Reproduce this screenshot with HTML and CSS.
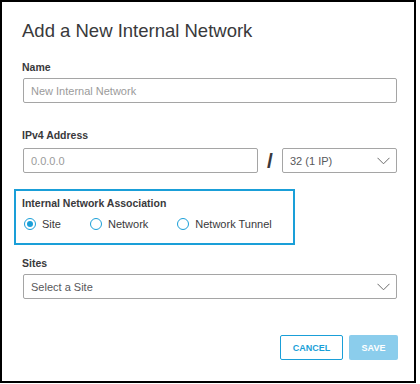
FILE: index.html
```html
<!DOCTYPE html>
<html lang="en">
<head>
    <meta charset="UTF-8">
    <meta name="viewport" content="width=device-width, initial-scale=1.0">
    <title>Add a New Internal Network</title>
    <link rel="stylesheet" href="styles.css">
</head>
<body>
    <!-- 弹窗 -->
    <div class="dialog">
        <h1 class="dialog-title">Add a New Internal Network</h1>

        <label class="field-label label-name">Name</label>
        <div class="text-input">
            <span class="placeholder">New Internal Network</span>
        </div>

        <label class="field-label label-ip">IPv4 Address</label>
        <div class="ip-row">
            <div class="text-input ip-input">
                <span class="placeholder">0.0.0.0</span>
            </div>
            <span class="slash">/</span>
            <div class="select-input mask-select">
                <span class="select-value">32 (1 IP)</span>
                <svg class="chevron" width="13" height="8" viewBox="0 0 13 8">
                    <polyline points="0.5,0.8 6.5,6.8 12.5,0.8" fill="none" stroke="#6b6b6b" stroke-width="1"/>
                </svg>
            </div>
        </div>

        <!-- 关联方式 -->
        <div class="assoc-box">
            <label class="field-label">Internal Network Association</label>
            <div class="radio-row">
                <div class="radio-item">
                    <span class="radio checked"></span>
                    <span class="radio-text">Site</span>
                </div>
                <div class="radio-item">
                    <span class="radio"></span>
                    <span class="radio-text">Network</span>
                </div>
                <div class="radio-item">
                    <span class="radio"></span>
                    <span class="radio-text">Network Tunnel</span>
                </div>
            </div>
        </div>

        <label class="field-label label-sites">Sites</label>
        <div class="select-input">
            <span class="select-value">Select a Site</span>
            <svg class="chevron" width="13" height="8" viewBox="0 0 13 8">
                <polyline points="0.5,0.8 6.5,6.8 12.5,0.8" fill="none" stroke="#6b6b6b" stroke-width="1"/>
            </svg>
        </div>

        <div class="button-group">
            <button class="btn btn-cancel">CANCEL</button>
            <button class="btn btn-save">SAVE</button>
        </div>
    </div>
</body>
</html>
```

FILE: styles.css
```css
/* 全局重置 */
* {
    margin: 0;
    padding: 0;
    box-sizing: border-box;
}

body {
    width: 420px;
    height: 384px;
    overflow: hidden;
    background: #fff;
    font-family: 'Liberation Sans', Arial, sans-serif;
    color: #39393b;
}

/* 弹窗容器 */
.dialog {
    width: 416px;
    height: 383px;
    border: 2px solid #000;
    padding: 18px 17px 0 20px;
    display: flex;
    flex-direction: column;
    background: #fff;
}

.dialog-title {
    font-size: 18.5px;
    font-weight: normal;
    line-height: 22px;
    color: #39393b;
}

/* 表单标签 */
.field-label {
    display: block;
    font-size: 10.5px;
    font-weight: bold;
    line-height: 14px;
    color: #39393b;
}

.label-name {
    margin-top: 18px;
}

.label-ip {
    margin-top: 25px;
}

.label-sites {
    margin-top: 11px;
}

/* 输入框 */
.text-input,
.select-input {
    height: 25px;
    margin-top: 4px;
    margin-left: 1px;
    border: 1px solid #a5a5a5;
    border-radius: 2px;
    padding: 0 7px;
    display: flex;
    align-items: center;
    font-size: 11px;
}

.placeholder {
    color: #9b9b9b;
}

.select-input {
    justify-content: space-between;
    padding-right: 6px;
}

.select-value {
    color: #58585b;
}

.chevron {
    display: block;
}

/* IP 行 */
.ip-row {
    display: flex;
    align-items: center;
    margin-top: 6px;
}

.ip-row .text-input,
.ip-row .select-input {
    margin-top: 0;
}

.ip-input {
    width: 235px;
}

.slash {
    width: 24px;
    text-align: center;
    font-size: 21px;
    font-weight: bold;
    color: #39393b;
    line-height: 25px;
}

.mask-select {
    flex: 1;
    margin-left: 0;
}

/* 关联方式区域 */
.assoc-box {
    width: 281px;
    margin-top: 16px;
    margin-left: -8px;
    border: 2px solid #1a9fd8;
    padding: 5px 6px 11px;
}

.radio-row {
    display: flex;
    gap: 29px;
    margin-top: 6px;
    padding-left: 2px;
}

.radio-item {
    display: flex;
    align-items: center;
    gap: 6px;
    height: 16px;
}

.radio {
    width: 12px;
    height: 12px;
    border: 1px solid #1a9fd8;
    border-radius: 50%;
    display: flex;
    align-items: center;
    justify-content: center;
}

.radio.checked::after {
    content: "";
    width: 6px;
    height: 6px;
    border-radius: 50%;
    background: #1a9fd8;
}

.radio-text {
    font-size: 11px;
    color: #39393b;
}

/* 按钮组 */
.button-group {
    display: flex;
    justify-content: flex-end;
    gap: 6px;
    margin-top: 36px;
    margin-right: -1px;
}

.btn {
    height: 25px;
    border-radius: 2px;
    font-family: 'Liberation Sans', Arial, sans-serif;
    font-size: 9px;
    font-weight: bold;
    cursor: pointer;
}

.btn-cancel {
    width: 63px;
    background: #fff;
    border: 1px solid #1a9fd8;
    color: #1a9fd8;
}

.btn-save {
    width: 49px;
    background: #8bcdec;
    border: none;
    color: #fff;
}
```
